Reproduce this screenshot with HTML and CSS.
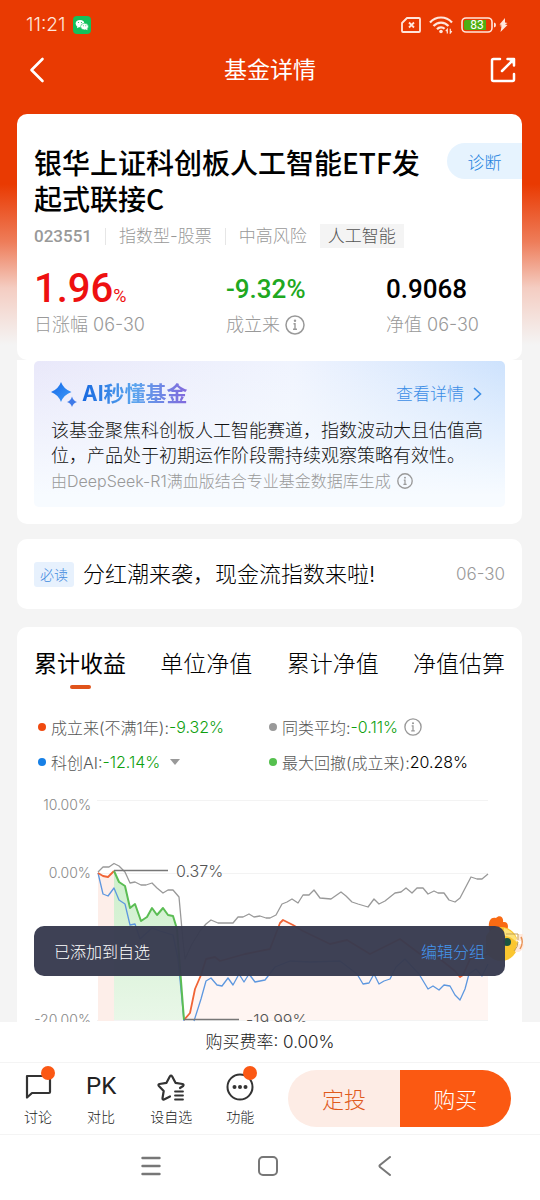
FILE: index.html
```html
<!DOCTYPE html>
<html lang="zh-CN">
<head>
<meta charset="utf-8">
<meta name="viewport" content="width=device-width, initial-scale=1">
<title>基金详情</title>
<link rel="stylesheet" href="styles.css">
</head>
<body>
<div class="app">
  <div class="status">
    <span class="time">11:21</span>
    <svg class="wechat" width="18" height="18" viewBox="0 0 18 18" aria-hidden="true">
      <rect width="18" height="18" rx="4" fill="#13c05b"/>
      <ellipse cx="7" cy="7.600" rx="4.300" ry="3.700" fill="#fff"/>
      <path d="M4.500 10l-.6 2.200 2.400-1.200z" fill="#fff"/>
      <ellipse cx="11.500" cy="10.600" rx="3.900" ry="3.300" fill="#fff" stroke="#13c05b" stroke-width=".6"/>
      <path d="M12.500 13.200l2 1-.4-2z" fill="#fff"/>
      <g fill="#13c05b"><circle cx="5.500" cy="6.500" r=".6"/><circle cx="8.500" cy="6.500" r=".6"/><circle cx="10.300" cy="9.800" r=".5"/><circle cx="12.800" cy="9.800" r=".5"/></g>
    </svg>
    <span class="spacer"></span>
    <svg width="20" height="16" viewBox="0 0 20 16" fill="none" stroke="#ffe6dc" stroke-width="1.800" aria-hidden="true">
      <path d="M6 1h12a1 1 0 0 1 1 1v12a1 1 0 0 1-1 1H2a1 1 0 0 1-1-1V6z" stroke-linejoin="round"/>
      <path d="M8 5.500l5 5M13 5.500l-5 5"/>
    </svg>
    <svg width="24" height="18" viewBox="0 0 24 18" fill="none" stroke="#ffe6dc" stroke-width="2.200" aria-hidden="true">
      <path d="M1 6.500C7-.2 17-.2 23 6.500M4.500 10c4.200-4.600 10.800-4.600 15 0M8 13.200c2.200-2.400 5.600-2.400 7.600-.4"/>
      <circle cx="12" cy="15.500" r="1.800" fill="#ffe6dc" stroke="none"/>
      <path d="M18.300 17.500v-4.200l-1.500 1.800M21.300 12.800V17l1.500-1.800" stroke-width="1.200"/>
    </svg>
    <svg width="47" height="16" viewBox="0 0 47 16" aria-hidden="true">
      <rect x="1" y="1" width="30" height="14" rx="4" fill="none" stroke="#ffe6dc" stroke-width="1.600"/>
      <path d="M5 3h20v10H5a2 2 0 0 1-2-2V5a2 2 0 0 1 2-2z" fill="#4fae12"/>
      <path d="M33 5.500q2 .3 2 2.500t-2 2.500z" fill="#ffe6dc"/>
      <path d="M44 1l-5.500 6.500 2.500.5-2.500 1 2 .5-1 5.500 7-7-2.500-.5 2.500-1.500-2.500-.5z" fill="#ffe6dc"/>
      <text class="battery-text" x="16" y="12" text-anchor="middle">83</text>
    </svg>
  </div>

  <header class="nav">
    <button class="icon-btn" aria-label="返回"><svg width="26" height="28" viewBox="0 0 26 28" fill="none" stroke="#fff" stroke-width="2.600" stroke-linecap="round" stroke-linejoin="round"><path d="M18.500 3L7.500 14l11 11"/></svg></button>
    <h1 class="nav-title">基金详情</h1>
    <button class="icon-btn" aria-label="分享"><svg width="26" height="26" viewBox="0 0 26 26" fill="none" stroke="#fff" stroke-width="2.500" stroke-linecap="round" stroke-linejoin="round"><path d="M10 2H3.500A1.500 1.500 0 0 0 2 3.500v19A1.500 1.500 0 0 0 3.500 24h19a1.500 1.500 0 0 0 1.500-1.500V17"/><path d="M12 14L23 3M17.500 2H24v6.500"/><path d="M19 2h5v5z" fill="#fff" stroke-width="1"/></svg></button>
  </header>

  <main class="content">
    <section class="card fund">
      <div class="fund-head">
        <h2 class="fund-name">银华上证科创板人工智能ETF发起式联接C</h2>
        <button class="diagnose">诊断</button>
      </div>
      <div class="meta">
        <span class="code">023551</span><i class="sep"></i>
        <span>指数型-股票</span><i class="sep"></i>
        <span>中高风险</span>
        <span class="tag">人工智能</span>
      </div>
      <div class="stats">
        <div class="stat"><div class="value up">1.96<small>%</small></div><div class="label">日涨幅 06-30</div></div>
        <div class="stat"><div class="value down">-9.32%</div><div class="label">成立来
          <svg class="info" width="20" height="20" viewBox="0 0 20 20"><circle cx="10" cy="10" r="9" fill="none" stroke="currentColor" stroke-width="1.500"/><circle cx="10" cy="5.800" r="1.200" fill="currentColor"/><path d="M8.500 8.800H10V14M8 14.300h4" fill="none" stroke="currentColor" stroke-width="1.400"/></svg></div></div>
        <div class="stat"><div class="value">0.9068</div><div class="label">净值 06-30</div></div>
      </div>
    </section>

    <section class="card ai">
      <div class="ai-box">
        <div class="ai-head">
          <svg width="26" height="26" viewBox="0 0 26 26" aria-hidden="true"><defs><linearGradient id="spark" x1="0" y1="0" x2="1" y2="1"><stop offset="0" stop-color="#1769e8"/><stop offset="1" stop-color="#3f9cf8"/></linearGradient></defs><path d="M10 1q2.600 7.200 10.500 10-7.900 2.800-10.500 10Q7.400 13.800 0 11q7.400-2.800 10-10z" fill="url(#spark)"/><path d="M21 15.500q1.200 4.200 5 5.500-3.800 1-5 5-1.200-4-5-5 3.800-1.300 5-5.500z" fill="#3f7ae8"/></svg>
          <h3 class="ai-title">AI秒懂基金</h3>
          <a class="ai-more" href="#detail">查看详情
            <svg width="9" height="14" viewBox="0 0 9 14" fill="none" stroke="currentColor" stroke-width="1.600"><path d="M1 1l6.500 6L1 13"/></svg></a>
        </div>
        <p class="ai-text">该基金聚焦科创板人工智能赛道，指数波动大且估值高位，产品处于初期运作阶段需持续观察策略有效性。</p>
        <p class="ai-source">由DeepSeek-R1满血版结合专业基金数据库生成
          <svg class="info" width="16" height="16" viewBox="0 0 20 20"><circle cx="10" cy="10" r="9" fill="none" stroke="currentColor" stroke-width="1.700"/><circle cx="10" cy="5.800" r="1.200" fill="currentColor"/><path d="M8.500 8.800H10V14M8 14.300h4" fill="none" stroke="currentColor" stroke-width="1.500"/></svg></p>
      </div>
    </section>

    <section class="card notice">
      <span class="must">必读</span>
      <a class="notice-title" href="#notice">分红潮来袭，现金流指数来啦!</a>
      <time class="date">06-30</time>
    </section>

    <section class="card chart-card">
      <nav class="tabs">
        <button class="tab active">累计收益</button>
        <button class="tab">单位净值</button>
        <button class="tab">累计净值</button>
        <button class="tab">净值估算</button>
      </nav>
      <div class="legend">
        <div class="item"><i class="dot orange"></i>成立来(不满1年):<b class="neg">-9.32%</b></div>
        <div class="item"><i class="dot gray"></i>同类平均:<b class="neg">-0.11%</b>
          <svg class="info gap" width="18" height="18" viewBox="0 0 20 20"><circle cx="10" cy="10" r="9" fill="none" stroke="currentColor" stroke-width="1.500"/><circle cx="10" cy="5.800" r="1.200" fill="currentColor"/><path d="M8.500 8.800H10V14M8 14.300h4" fill="none" stroke="currentColor" stroke-width="1.400"/></svg></div>
        <div class="item"><i class="dot blue"></i>科创AI:<b class="neg">-12.14%</b><svg class="caret" width="10" height="6" viewBox="0 0 10 6"><path d="M0 0h10L5 6z" fill="#999"/></svg></div>
        <div class="item"><i class="dot green"></i>最大回撤(成立来):<b class="num">20.28%</b></div>
      </div>
      <svg class="chart" viewBox="17 790 505 250" role="img" aria-label="累计收益走势">
        <defs><linearGradient id="dd" x1="0" y1="0" x2="0" y2="1"><stop offset="0" stop-color="#cdefcb"/><stop offset="1" stop-color="#e9f7e8"/></linearGradient></defs>
        <path d="M97 801.500H488M97 874.500H488M97 1021.500H488" stroke="#f3f3f3" fill="none"/>
        <path d="M98 874l5 3 5 1 6-6V1022H98z" fill="#fdeee9"/>
        <path d="M184 1021l6-7 5-24 6-14 5-16 9-10H270l13-29 10 5 10 6 27 13 17-4 23 14 30-15 20 15 20 5 20 18 10-18 18-5V1021z" fill="#fff5f2"/>
        <path d="M114 872l5 11 6 4 5 22 5-4 6 17 6-4 5-9 5 7 6-7 5 7 5 1 4 13 7 91H114z" fill="url(#dd)"/>
        <g fill="none" stroke-linejoin="round">
          <polyline stroke="#999" stroke-width="1.300" points="98,873 103,868 109,868 114,864.500 119,867 125,873 130,884 135,883 141,886 146,886 152,884 157,889 163,894 168,891 173,891 179,898 183,942 185,960 192,945 200,932 206,925 211,921 218,924 233,924 238,918 243,918 249,915 254,918 260,917 266,919 270,919 276,916 282,905 287,903 292,900 298,904 303,896 309,896 314,891 320,899 331,900 341,893 346,897 352,903 358,905 368,908 374,900 379,905 385,902 395,894 401,893 406,889 412,894 417,889 423,889 428,895 434,892 438,894 444,894 449,901 455,903 460,899 471,878 477,880 482,880 488,875"/>
          <polyline stroke="#5d97df" stroke-width="1.300" points="98,874 103,895 108,897 114,889 119,901 125,905 130,926 135,925 140,940 152,929 160,932 173,936 178,960 184,1022"/>
          <polyline stroke="#5d97df" stroke-width="1.300" points="194,1022 201,1000 206,982 211,979 217,986 222,987 228,979 233,986 239,975 244,983 249,975 255,983 265,981 275,968 290,962 310,963 340,962 357,975 363,985 369,984 374,975 379,985 384,982 390,980 396,968 405,960 419,975 428,990 433,987 439,991 444,986 450,987 455,996 460,1001 465,990 469,975 476,970 482,977 488,965"/>
          <polyline stroke="#f06436" stroke-width="1.800" points="98,874 103,877 108,878 114,872"/>
          <polyline stroke="#f06436" stroke-width="1.800" points="184,1021 190,1014 195,990 201,976 206,960 215,958 220,962 245,955 270,950 280,924 283,921 293,926 303,932 330,945 347,941 370,955 400,940 420,955 440,960 455,972 460,978 463,976 470,960 488,955"/>
          <polyline stroke="#5bbd54" stroke-width="2" points="114,872 119,883 125,887 130,909 135,905 141,922 147,918 152,909 157,916 163,909 168,916 173,917 177,930 184,1021"/>
          <path stroke="#777" stroke-width="1.300" d="M114 871.500H168M184 1020.500H239"/>
        </g>
        <g class="axis"><text x="91" y="811" text-anchor="end">10.00%</text><text x="91" y="879" text-anchor="end">0.00%</text><text x="91" y="1026" text-anchor="end">-20.00%</text></g>
        <g class="callout"><text x="176" y="878">0.37%</text><text x="246" y="1027">-19.99%</text></g>
      </svg>
    </section>

    <svg class="mascot" width="40" height="50" viewBox="0 0 40 50" aria-hidden="true">
      <path d="M4 18C1 8 4 1 10 3c4-4 8 0 7 4 6-1 6 6 3 10z" fill="#f96a13"/>
      <circle cx="15" cy="29" r="17" fill="#fbc62f"/><path d="M18 13q12 4 14 16-6-8-14-8z" fill="#fde279"/>
      <circle cx="21" cy="27" r="4" fill="#1d5440"/>
      <path d="M32 19h5q1 4-2 7h-5zM31 29h7q0 5-5 8h-4z" fill="#ffe9dc"/><path d="M35 22q3 5-1 12" fill="none" stroke="#e89255" stroke-width="1.500"/>
      <path d="M20 19h12v6M32 27q0 5-4 9" fill="none" stroke="#c3a158"/>
    </svg>
    <div class="toast" role="status"><span>已添加到自选</span><a class="toast-link" href="#group">编辑分组</a></div>
  </main>

  <footer class="bottom">
    <div class="fee">购买费率: 0.00%</div>
    <div class="actions">
      <button class="action badge"><svg width="28" height="30" viewBox="0 0 28 30" fill="none" stroke="#333" stroke-width="2.200" stroke-linejoin="round"><path d="M3 5h22a1 1 0 0 1 1 1v15a1 1 0 0 1-1 1H8l-5 4.500z"/></svg>讨论</button>
      <button class="action"><span class="pk">PK</span>对比</button>
      <button class="action"><svg width="30" height="30" viewBox="0 0 30 30" fill="none" stroke="#333" stroke-width="2.200" stroke-linejoin="round" stroke-linecap="round"><path d="M14 25.500L8 28.500q-1.500.5-1.500-1.200l1.200-7.300-4.800-5q-1.200-1.500.6-2l7-1.200 3.300-6.300q1.200-1.800 2.400 0l3.300 6.300 7 1.200q1.800.5.600 2L24 17"/><path d="M19 20.500h8M19 24.500h8M19 28.500h8" stroke-width="1.800"/></svg>设自选</button>
      <button class="action badge"><svg width="28" height="30" viewBox="0 0 28 30"><circle cx="14" cy="16" r="12.500" fill="none" stroke="#333" stroke-width="2"/><g fill="#333"><circle cx="8.500" cy="16" r="2"/><circle cx="14" cy="16" r="2"/><circle cx="19.500" cy="16" r="2"/></g></svg>功能</button>
      <div class="buy-group"><button class="plan">定投</button><button class="buy">购买</button></div>
    </div>
    <div class="sysnav">
      <button class="icon-btn" aria-label="最近任务"><svg width="20" height="20" viewBox="0 0 20 20" stroke="#777" stroke-width="2.400" stroke-linecap="round"><path d="M1.500 2h17M1.500 10h17M1.500 18h17"/></svg></button>
      <button class="icon-btn" aria-label="主页"><svg width="20" height="20" viewBox="0 0 20 20" fill="none" stroke="#777" stroke-width="2"><rect x="1" y="1" width="18" height="18" rx="4"/></svg></button>
      <button class="icon-btn" aria-label="返回上一页"><svg width="20" height="20" viewBox="0 0 20 20" fill="none" stroke="#777" stroke-width="2" stroke-linecap="round" stroke-linejoin="round"><path d="M15 1L5 9q-1 1 0 2l10 8"/></svg></button>
    </div>
  </footer>
</div>
</body>
</html>
```
FILE: styles.css
```css
* { box-sizing: border-box; }

body {
  margin: 0;
  font-family: Inter, "Noto Sans CJK SC", sans-serif;
  font-weight: 300;
  color: #333;
}

h1, h2, h3, p { margin: 0; font-weight: inherit; }
button { border: 0; padding: 0; background: none; font: inherit; color: inherit; }
a { color: inherit; text-decoration: none; }
svg { flex: none; }

.app {
  height: 100vh;
  display: flex;
  flex-direction: column;
  background: linear-gradient(#e93a02 0, #e93a02 184px, #ee7d5a 242px, #f4cdc2 288px, #f4f4f4 345px);
}

.status {
  height: 48px;
  padding: 2px 32px 0 26px;
  display: flex;
  align-items: center;
  gap: 8px;
}
.time { font-size: 19px; line-height: 24px; color: #ffe6dc; }
.spacer { flex: 1; }
.battery-text { font: 400 12px Roboto, sans-serif; fill: #fff; }

.nav {
  height: 66px;
  padding: 0 24px 22px;
  display: flex;
  align-items: center;
  justify-content: space-between;
}
.icon-btn { display: flex; }
.nav-title { font-size: 23px; line-height: 32px; font-weight: 400; color: #fff; }

.content {
  position: relative;
  flex: 1;
  min-height: 0;
  overflow: hidden;
  padding: 0 18px 0 17px;
}
.card { background: #fff; border-radius: 10px; }

.fund { padding: 29px 0 22px 17px; }
.fund-head { display: flex; justify-content: space-between; align-items: flex-start; }
.fund-name {
  flex: 1;
  padding-top: 1px;
  font-family: "Noto Sans CJK SC", sans-serif;
  font-size: 28px;
  line-height: 36px;
  font-weight: 500;
  color: #000;
}
.diagnose {
  width: 75px;
  height: 36px;
  border-radius: 18px 0 0 18px;
  background: #e6f3fe;
  color: #2583e0;
  font-size: 17px;
}
.meta {
  margin-top: 8px;
  display: flex;
  align-items: center;
  gap: 13px;
  height: 24px;
  font-size: 17px;
  line-height: 22px;
  color: #999;
}
.code { font-family: Roboto, sans-serif; font-weight: 500; }
.sep { width: 1px; height: 17px; background: #e6e6e6; }
.tag { padding: 0 8px; line-height: 24px; background: #f4f4f4; color: #555; }

.stats {
  margin-top: 18px;
  display: grid;
  grid-template-columns: 192px 160px 1fr;
}
.value {
  display: flex;
  align-items: baseline;
  height: 46px;
  font: 500 26px/46px Roboto, sans-serif;
  color: #000;
}
.value.up { font-size: 40px; color: #ee1010; }
.value small { font-size: 18px; font-weight: 400; }
.value.down { color: #20a820; }
.label {
  display: flex;
  align-items: center;
  gap: 5px;
  font-size: 18px;
  line-height: 26px;
  color: #999;
}
.info { color: #999; }

.ai { padding: 1px 17px 17px; border-radius: 0 0 10px 10px; }
.ai-box {
  padding: 18px 8px 13px 17px;
  border-radius: 5px;
  background:
    linear-gradient(rgba(247, 251, 255, 0), #f7fbff 92%),
    linear-gradient(90deg, #e9e8fa, #f0f4fe 55%, #cde2fd);
}
.ai-head { display: flex; align-items: center; gap: 5px; padding-right: 15px; }
.ai-title {
  font-size: 21px;
  line-height: 30px;
  font-weight: 700;
  white-space: nowrap;
  background: linear-gradient(90deg, #1769e0, #5ba5ee 50%, #8268dc);
  -webkit-background-clip: text;
  background-clip: text;
  color: transparent;
}
.ai-more {
  margin-left: auto;
  display: flex;
  align-items: center;
  gap: 9px;
  font-size: 17px;
  line-height: 26px;
  color: #3c8ee6;
}
.ai-text { margin-top: 9px; font-size: 18px; line-height: 25px; color: #111; }
.ai-source {
  display: flex;
  align-items: center;
  gap: 6px;
  font-size: 16px;
  line-height: 26px;
  color: #999;
}

.notice {
  margin-top: 15px;
  padding: 19px 17px;
  display: flex;
  align-items: center;
  gap: 9px;
}
.must {
  padding: 0 6px;
  border-radius: 3px;
  background: #e7f1fd;
  color: #3f8ade;
  font-size: 14px;
  line-height: 25px;
}
.notice-title { flex: 1; font-size: 22px; line-height: 32px; color: #000; }
.date { font-size: 17px; color: #999; }

.chart-card { margin-top: 18px; padding-top: 21px; }
.tabs { display: flex; justify-content: space-between; padding: 0 17px; }
.tab {
  display: flex;
  flex-direction: column;
  align-items: center;
  gap: 4px;
  font-size: 23px;
  line-height: 33px;
  color: #000;
}
.tab::after { content: ""; width: 21px; height: 4px; border-radius: 2px; }
.tab.active { font-weight: 400; }
.tab.active::after { background: #e0531a; }
.legend {
  margin-top: 20px;
  padding: 0 22px 0 21px;
  display: grid;
  grid-template-columns: 1fr 1fr;
}
.item {
  display: flex;
  align-items: center;
  height: 35px;
  font-size: 16px;
  color: #555;
  white-space: nowrap;
}
.item b { font-weight: 300; }
.item .neg { color: #0f9f0f; }
.item .num { color: #000; }
.dot { width: 8px; height: 8px; margin-right: 5px; border-radius: 50%; }
.orange { background: #f04a10; }
.gray { background: #999; }
.blue { background: #1780e6; }
.green { background: #55c04e; }
.gap { margin-left: 6px; }
.caret { margin-left: 10px; }
.chart { display: block; width: 100%; margin-top: 10px; }
.axis { font-size: 14px; fill: #888; }
.callout { font-size: 16px; fill: #555; }

.mascot { position: absolute; right: 14px; bottom: 57px; }
.toast {
  position: absolute;
  left: 34px;
  right: 35px;
  bottom: 46px;
  height: 50px;
  padding: 0 20px;
  display: flex;
  align-items: center;
  justify-content: space-between;
  border-radius: 10px;
  background: rgba(56, 59, 80, 0.97);
  color: #fff;
  font-size: 16px;
}
.toast-link { color: #4496ee; }

.bottom { background: #fff; }
.fee {
  height: 41px;
  border-bottom: 1px solid #f4f4f4;
  text-align: center;
  font-size: 17px;
  line-height: 41px;
  color: #222;
}
.actions {
  display: flex;
  align-items: center;
  gap: 34px;
  height: 72px;
  padding: 0 29px 0 24px;
  border-bottom: 1px solid #f4f4f4;
}
.action {
  position: relative;
  display: flex;
  flex-direction: column;
  align-items: center;
  gap: 6px;
  font-size: 14px;
  line-height: 20px;
  white-space: nowrap;
  color: #222;
}
.pk { font: 400 24px/30px Roboto, sans-serif; }
.badge::before {
  content: "";
  position: absolute;
  top: -5px;
  right: -3px;
  width: 14px;
  height: 14px;
  border-radius: 50%;
  background: #fb5814;
}
.buy-group {
  flex: 1;
  display: flex;
  height: 57px;
  border-radius: 29px;
  overflow: hidden;
  font-size: 22px;
}
.plan, .buy { flex: 1; padding-bottom: 2px; }
.plan { background: #fdece5; color: #e05a1c; }
.buy { background: #fb5912; color: #fff; }
.sysnav {
  height: 65px;
  padding: 0 4px 4px 0;
  display: flex;
  align-items: center;
  justify-content: center;
  gap: 97px;
}
```
